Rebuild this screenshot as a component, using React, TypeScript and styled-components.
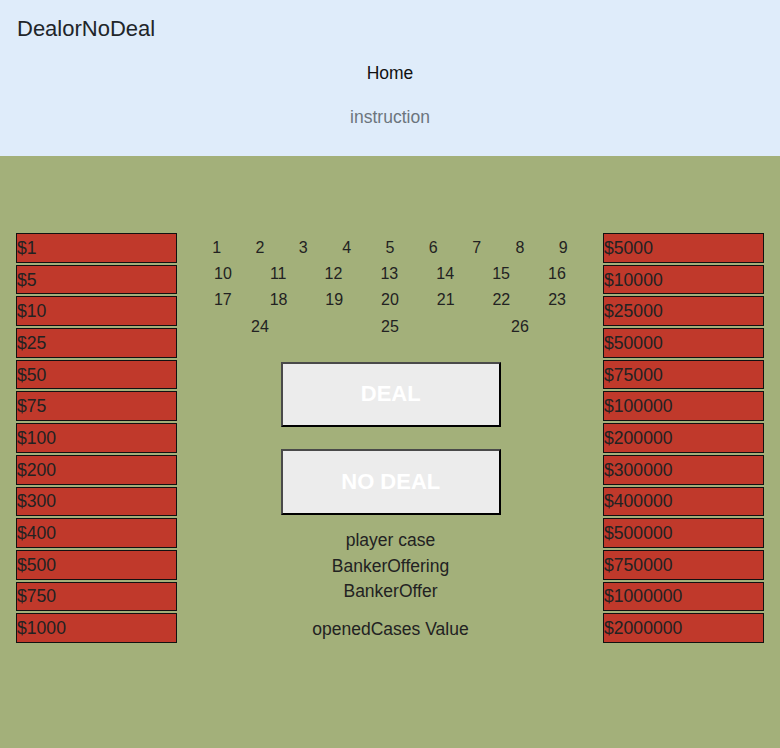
import React from "react";
import styled, { createGlobalStyle } from "styled-components";

const GlobalStyle = createGlobalStyle`
  html, body {
    margin: 0;
    padding: 0;
  }
  body {
    font-family: "Liberation Sans", Arial, Helvetica, sans-serif;
    background: #a3b07a;
    color: #212529;
    min-height: 100vh;
  }
`;

const Page = styled.div`
  min-height: 748px;
  display: flex;
  flex-direction: column;
`;

const Header = styled.header`
  background: #dfecfa;
  height: 156px;
  box-sizing: border-box;
  padding: 16px 16px 0 17px;
`;

const Title = styled.h1`
  margin: 0;
  font-size: 22px;
  line-height: 25px;
  font-weight: 400;
  color: #212529;
`;

const Nav = styled.nav`
  display: flex;
  flex-direction: column;
  align-items: center;
  padding-right: 1px;
`;

const NavLink = styled.a<{ $muted?: boolean; $top: number }>`
  font-size: 17.5px;
  line-height: 20px;
  margin-top: ${(p) => p.$top}px;
  color: ${(p) => (p.$muted ? "#6c757d" : "#111")};
  text-decoration: none;
  cursor: pointer;
`;

const Main = styled.main`
  flex: 1;
  display: flex;
  align-items: flex-start;
  padding: 77px 16px 0;
`;

const ValueColumn = styled.div`
  width: 161px;
  display: flex;
  flex-direction: column;
  gap: 2px;
`;

const ValueBox = styled.div`
  box-sizing: border-box;
  height: 29.7px;
  background: #c0392b;
  border: 1px solid #111;
  display: flex;
  align-items: center;
  font-size: 17.6px;
  line-height: 20px;
  color: #222;
  padding: 0;
`;

const Center = styled.div`
  flex: 1;
  display: flex;
  flex-direction: column;
  align-items: center;
`;

const CaseGrid = styled.div`
  box-sizing: border-box;
  width: 100%;
  padding: 1.5px 18px 0;
  display: flex;
  flex-direction: column;
`;

const CaseRow = styled.div`
  display: flex;
  justify-content: space-around;
`;

const CaseNumber = styled.span`
  font-size: 16px;
  line-height: 18.4px;
  padding: 4px 0;
  color: #222;
  cursor: pointer;
`;

const Buttons = styled.div`
  display: flex;
  flex-direction: column;
  gap: 22.3px;
  margin-top: 21.5px;
  padding-left: 1.5px;
`;

const ActionButton = styled.button`
  box-sizing: border-box;
  width: 220px;
  height: 65.5px;
  background: #ececec;
  border-style: solid;
  border-width: 2px;
  border-color: #4a4a4a #000 #000 #4a4a4a;
  color: #fff;
  font-family: "Liberation Sans", Arial, Helvetica, sans-serif;
  font-weight: 700;
  font-size: 22px;
  padding: 0;
  cursor: pointer;
`;

const Info = styled.div`
  margin-top: 13.5px;
  display: flex;
  flex-direction: column;
  align-items: center;
  padding-left: 1px;
`;

const InfoLine = styled.div<{ $gap?: number }>`
  font-size: 17.5px;
  line-height: 25.5px;
  color: #222;
  margin-top: ${(p) => p.$gap ?? 0}px;
`;

const lowValues = [1, 5, 10, 25, 50, 75, 100, 200, 300, 400, 500, 750, 1000];
const highValues = [
  5000, 10000, 25000, 50000, 75000, 100000, 200000, 300000, 400000, 500000,
  750000, 1000000, 2000000,
];

const caseRows = [
  [1, 2, 3, 4, 5, 6, 7, 8, 9],
  [10, 11, 12, 13, 14, 15, 16],
  [17, 18, 19, 20, 21, 22, 23],
  [24, 25, 26],
];

export default function App() {
  return (
    <>
      <GlobalStyle />
      <Page>
        <Header>
          <Title>DealorNoDeal</Title>
          <Nav>
            <NavLink $top={22.2}>Home</NavLink>
            <NavLink $top={24.3} $muted>
              instruction
            </NavLink>
          </Nav>
        </Header>
        <Main>
          <ValueColumn>
            {lowValues.map((v) => (
              <ValueBox key={v}>${v}</ValueBox>
            ))}
          </ValueColumn>
          <Center>
            <CaseGrid>
              {caseRows.map((row, i) => (
                <CaseRow key={i}>
                  {row.map((n) => (
                    <CaseNumber key={n}>{n}</CaseNumber>
                  ))}
                </CaseRow>
              ))}
            </CaseGrid>
            <Buttons>
              <ActionButton>DEAL</ActionButton>
              <ActionButton>NO DEAL</ActionButton>
            </Buttons>
            <Info>
              <InfoLine>player case</InfoLine>
              <InfoLine>BankerOffering</InfoLine>
              <InfoLine>BankerOffer</InfoLine>
              <InfoLine $gap={12.5}>openedCases Value</InfoLine>
            </Info>
          </Center>
          <ValueColumn>
            {highValues.map((v) => (
              <ValueBox key={v}>${v}</ValueBox>
            ))}
          </ValueColumn>
        </Main>
      </Page>
    </>
  );
}
